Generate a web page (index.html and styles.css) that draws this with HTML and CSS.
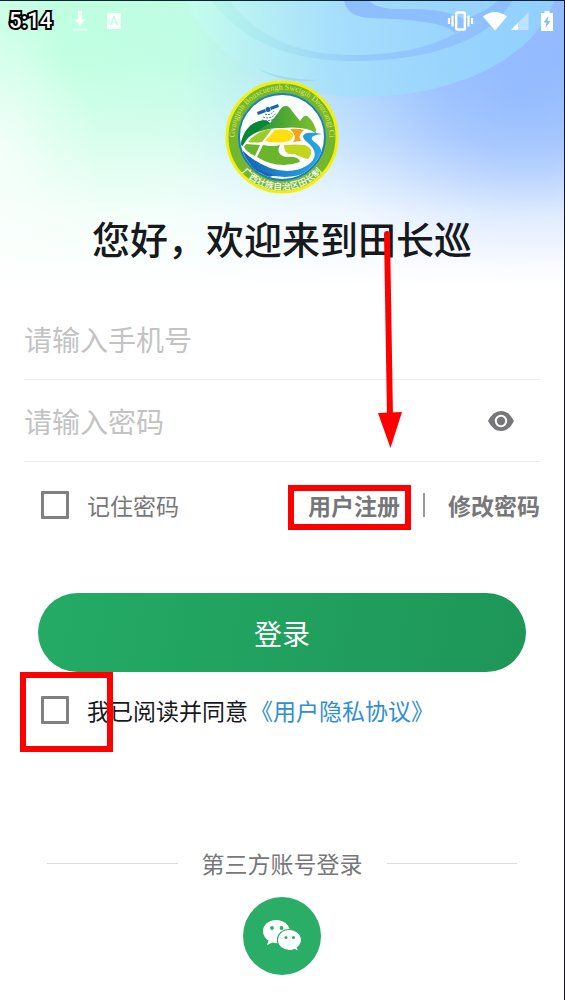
FILE: index.html
```html
<!DOCTYPE html>
<html lang="zh-CN">
<head>
<meta charset="utf-8">
<meta name="viewport" content="width=device-width, initial-scale=1">
<title>田长巡</title>
<link rel="stylesheet" href="styles.css">
</head>
<body>
<div class="screen">
  <svg class="backdrop" viewBox="0 0 564 320" preserveAspectRatio="none" aria-hidden="true">
    <defs>
      <linearGradient id="hue" x1="0" y1="0" x2="564" y2="60" gradientUnits="userSpaceOnUse">
        <stop offset="0" stop-color="#ccffe8"/>
        <stop offset=".12" stop-color="#bfffe0"/>
        <stop offset=".34" stop-color="#befde4"/>
        <stop offset=".55" stop-color="#aee0fb"/>
        <stop offset=".78" stop-color="#97c1ff"/>
        <stop offset="1" stop-color="#8fb6ff"/>
      </linearGradient>
      <linearGradient id="fade" x1="0" y1="0" x2="0" y2="1">
        <stop offset="0" stop-color="#fff" stop-opacity="0"/>
        <stop offset=".2" stop-color="#fff" stop-opacity=".06"/>
        <stop offset=".42" stop-color="#fff" stop-opacity=".36"/>
        <stop offset=".66" stop-color="#fff" stop-opacity=".82"/>
        <stop offset=".9" stop-color="#fff"/>
      </linearGradient>
      <radialGradient id="glow">
        <stop offset="0" stop-color="#8fb8ff" stop-opacity=".7"/>
        <stop offset=".35" stop-color="#94bcff" stop-opacity=".52"/>
        <stop offset=".7" stop-color="#a4c8ff" stop-opacity=".18"/>
        <stop offset="1" stop-color="#c0d8ff" stop-opacity="0"/>
      </radialGradient>
      <radialGradient id="haze">
        <stop offset="0" stop-color="#fff" stop-opacity=".6"/>
        <stop offset=".5" stop-color="#fff" stop-opacity=".3"/>
        <stop offset="1" stop-color="#fff" stop-opacity="0"/>
      </radialGradient>
      <linearGradient id="ring" x1="185" y1="0" x2="560" y2="0" gradientUnits="userSpaceOnUse">
        <stop offset="0" stop-color="#c8fff0" stop-opacity=".6"/>
        <stop offset=".4" stop-color="#a4e0fb" stop-opacity=".75"/>
        <stop offset="1" stop-color="#8fd0ff" stop-opacity=".95"/>
      </linearGradient>
      <linearGradient id="band" x1="220" y1="0" x2="505" y2="0" gradientUnits="userSpaceOnUse">
        <stop offset="0" stop-color="#a8eee4" stop-opacity=".3"/>
        <stop offset=".5" stop-color="#93c8fa" stop-opacity=".9"/>
        <stop offset="1" stop-color="#8dbfff"/>
      </linearGradient>
    </defs>
    <rect width="564" height="320" fill="url(#hue)"/>
    <rect width="564" height="320" fill="url(#fade)"/>
    <ellipse cx="0" cy="150" rx="100" ry="130" fill="url(#haze)"/>
    <ellipse cx="520" cy="90" rx="220" ry="180" fill="url(#glow)"/>
    <path d="M187 0C208 52 272 96 360 96C448 96 532 62 554 0Z" fill="url(#ring)"/>
    <path d="M212 0C235 32 278 59 350 60C430 61 492 38 512 0H498C492 12 476 24 452 34C430 46 400 54 350 54C292 53 252 31 230 0Z" fill="url(#band)"/>
    <path d="M344 0C347 12 356 16 370 17C410 18 448 22 455 32Q484 20 502 0H498Q484 12 464 18C446 8 420 8 400 8Q376 8 370 0Z" fill="#8dbfff"/>
    <path d="M258 68Q284 79 317 79Q286 84 258 68Z" fill="#98d4ea" opacity=".7"/>
  </svg>

  <header class="status">
    <div class="status-group">
      <time class="clock">5:14</time>
      <svg class="dl" width="18" height="22" viewBox="0 0 18 22" fill="#fff" opacity=".8" aria-hidden="true"><path d="M7 1h4v8h4l-6 7-6-7h4zM2 18.500h14v2H2z"/></svg>
      <svg width="16" height="18" viewBox="0 0 16 18" aria-hidden="true"><rect x="1" y="1" width="14" height="16" rx="1" fill="#fff" opacity=".9"/><path d="M4.500 13L8 4.500l3.500 8.500M5.800 10.500h4.400" fill="none" stroke="#c9fbe6" stroke-width="1.600"/></svg>
    </div>
    <div class="status-group status-right">
      <svg width="27" height="20" viewBox="0 0 27 20" fill="none" stroke="#fff" aria-hidden="true"><rect x="9.200" y="1.500" width="8.600" height="17" rx="1" stroke-width="2.400"/><path d="M5.500 4.500v11M21.500 4.500v11M2 7v6M25 7v6" stroke-width="2.200"/></svg>
      <svg class="wifi" width="26" height="20" viewBox="0 0 26 20" fill="#fff" aria-hidden="true"><path d="M1 5.500Q13-3.500 25 5.500L13 19.500z"/></svg>
      <svg width="18" height="18" viewBox="0 0 18 18" fill="#fff" aria-hidden="true"><path d="M17.500 0v18H0z" opacity=".4"/><path d="M7 11v7H0z"/></svg>
      <svg class="battery" width="12" height="20" viewBox="0 0 12 20" aria-hidden="true"><path d="M3.500 0h5v2H12v18H0V2h3.500z" fill="#fff"/><path d="M7.500 5L2.500 11.500h3L4.500 17l5-7h-3z" fill="#8bb6f5"/></svg>
    </div>
  </header>

  <main class="content">
    <svg class="logo" width="114" height="114" viewBox="0 0 114 114" role="img" aria-label="广西壮族自治区田长制">
      <defs>
        <path id="arcTop" d="M13 75A47.500 47.500 0 1 1 101 75"/>
        <path id="arcBottom" d="M5 67A53 53 0 0 0 109 67"/>
        <clipPath id="disc"><circle cx="57" cy="57" r="42"/></clipPath>
        <linearGradient id="hill" x1="0" x2="1"><stop offset="0" stop-color="#0a8a3c"/><stop offset="1" stop-color="#7fc02c"/></linearGradient>
        <linearGradient id="river" x1="0" x2="1"><stop offset="0" stop-color="#1464b4"/><stop offset="1" stop-color="#27a8e6"/></linearGradient>
      </defs>
      <circle cx="57" cy="57" r="55" fill="#74b72e" stroke="#f3ef0c" stroke-width="3"/>
      <circle cx="57" cy="57" r="43" fill="#fff" stroke="#1c7fc0" stroke-width="2"/>
      <g clip-path="url(#disc)">
        <path d="M16 64C18 52 25 43 35 41Q41 39 45 43L53 33Q57 25 61 26Q64 26 67 31L75 41Q79 35 82 36Q87 39 91 49V54H45Q27 54 17 66Z" fill="url(#hill)"/>
        <path d="M16 64C18 52 25 43 35 41Q41 39 45 43Q35 48 30 54Q22 58 17 66Z" fill="#078538"/>
        <path d="M19 65C22 53 40 48 58 48Q82 46 92 54L93 75Q82 87 59 87Q34 87 19 71Z" fill="#fff"/>
        <path d="M23 62Q33 50 47 49L37 62Q29 63 23 62Z" fill="#9ccb28"/>
        <path d="M50 50Q59 48 65 51Q72 56 64 61Q52 64 40 61Z" fill="#ffde0d"/>
        <path d="M65 49Q73 48 79 50Q72 56 76 61L68 62Q73 56 65 49Z" fill="#f6a31b"/>
        <path d="M21 64L35 65L30 76Q20 71 19 67Z" fill="#6bb52d"/>
        <path d="M38 65Q48 67 55 65Q50 74 61 77Q74 76 75 82Q53 90 32 77Z" fill="#6bb52d"/>
        <path d="M59 65Q70 64 80 65Q91 70 83 79Q74 77 70 74Q59 76 59 65Z" fill="#c5d51d"/>
        <path d="M97 54C78 50 74 56 82 62Q97 74 83 85Q67 95 45 88Q29 82 17 70Q21 88 39 94Q66 101 84 91Q106 76 91 63Q80 56 97 54Z" fill="url(#river)"/>
        <path d="M24 83Q36 92 50 95L39 99Z" fill="#1768b3"/>
      </g>
      <g fill="#1464b4"><path d="M32 32l8-3 1 3-8 3zM45 27l8-3 1 3-8 3z"/><circle cx="43" cy="29.500" r="2.500"/></g>
      <g fill="none" stroke="#3f7d9f" stroke-width="1" stroke-dasharray="2 1"><path d="M40 34q5 2 9-3"/><path d="M38 37q8 3 13-4"/><path d="M37 40q11 3 17-6"/></g>
      <text class="seal-top"><textPath href="#arcTop" startOffset="50%" text-anchor="middle">Gvangjsih Bouxcuengh Swcigih Denzcangj Ci</textPath></text>
      <text class="seal-bottom"><textPath href="#arcBottom" startOffset="50%" text-anchor="middle">广西壮族自治区田长制</textPath></text>
    </svg>
    <h1 class="title">您好，欢迎来到田长巡</h1>

    <form class="form">
      <div class="field">
        <input class="input" type="tel" placeholder="请输入手机号" aria-label="手机号">
      </div>
      <div class="field">
        <input class="input" type="password" placeholder="请输入密码" aria-label="密码">
        <button class="eye" type="button" aria-label="显示密码">
          <svg width="26" height="20" viewBox="0 0 26 20" aria-hidden="true"><path d="M0 10Q5 0 13 0T26 10Q21 20 13 20T0 10Z" fill="#77777a"/><circle cx="13" cy="10" r="5.200" fill="#77777a" stroke="#fff" stroke-width="2"/></svg>
        </button>
      </div>

      <div class="options">
        <label class="check muted"><input class="box" type="checkbox"><span>记住密码</span></label>
        <nav class="links">
          <a class="link marked" href="#register">用户注册</a>
          <span class="bar"></span>
          <a class="link" href="#password">修改密码</a>
        </nav>
      </div>

      <button class="submit" type="submit">登录</button>

      <div class="agree">
        <span class="tick marked"><input class="box" id="agree" type="checkbox"></span>
        <label for="agree">我已阅读并同意</label>
        <a class="policy" href="#privacy">《用户隐私协议》</a>
      </div>
    </form>

    <footer class="third">
      <div class="divider"><span>第三方账号登录</span></div>
      <button class="wechat" type="button" aria-label="微信登录">
        <svg width="40" height="34" viewBox="0 0 40 34" aria-hidden="true">
          <path d="M14 1C6.500 1 1 6 1 12Q1 18 6.500 21.500L5 26L10.500 23.500Q14 24.500 18 24C26 23 28 17 28 12C27.500 6 22 1 14 1Z" fill="#fff"/>
          <path d="M27.500 10.500C20.500 10.500 15.500 15 15.500 21S20.500 31.500 27.500 31.500Q30.500 31.500 32.500 30.500L36.500 32.500L35.500 28.500Q39.500 25.500 39.500 21C39.500 15 34 10.500 27.500 10.500Z" fill="#fff" stroke="#2aae67" stroke-width="1.200"/>
          <g fill="#2aae67"><circle cx="10" cy="9" r="1.900"/><circle cx="19.500" cy="9" r="1.900"/><circle cx="24" cy="18.500" r="1.500"/><circle cx="31.500" cy="18.500" r="1.500"/></g>
        </svg>
      </button>
    </footer>
  </main>

  <svg class="arrow" width="26" height="222" viewBox="0 0 26 222" aria-hidden="true"><path d="M10 5L13 188" stroke="#f00" stroke-width="6" stroke-linecap="round"/><path d="M1 184L25 183L13.500 219Z" fill="#f00"/></svg>
</div>
</body>
</html>
```
FILE: styles.css
```css
* { box-sizing: border-box; }

body {
  margin: 0;
  background: #fff;
  color: #17191c;
  font-family: "Noto Sans CJK SC", "Noto Sans", sans-serif;
  font-size: 23px;
}

button, input { font: inherit; }
a { text-decoration: none; }
svg { display: block; flex: none; }

.screen {
  position: relative;
  min-height: 100vh;
  border-top: 1px solid #0b2230;
  border-right: 1px solid #14142e;
}

.backdrop {
  position: absolute;
  top: 0;
  left: 0;
  width: 100%;
  height: 320px;
}

.status {
  position: relative;
  display: flex;
  align-items: center;
  justify-content: space-between;
  height: 39px;
  padding: 0 11px 0 9px;
}

.status-group { display: flex; align-items: center; gap: 17px; }
.status-right { gap: 3px; }
.dl { margin-left: 2px; }
.wifi { margin-left: 5px; }
.battery { margin-left: 9px; }

.clock {
  color: #fff;
  font: 500 22px/26px Roboto, sans-serif;
  -webkit-text-stroke: 4px #000;
  paint-order: stroke fill;
}

.content {
  position: relative;
  display: flex;
  flex-direction: column;
  align-items: center;
  padding: 40px 24px 24px;
}

.seal-top { font: 8px "Liberation Serif", serif; fill: #dcea5a; }
.seal-bottom { font: 500 9px "Noto Sans CJK SC", sans-serif; fill: #fff; }

.title {
  margin: 20px 0 36px;
  font-size: 38px;
  line-height: 48px;
  font-weight: 500;
}

.form { width: 100%; }

.field {
  display: flex;
  align-items: center;
  height: 82px;
  border-bottom: 1px solid #ebebeb;
}

.input {
  flex: 1;
  min-width: 0;
  height: 48px;
  padding: 0;
  border: 0;
  outline: 0;
  background: none;
  font-size: 28px;
}

.input::placeholder { color: #c3c3c3; opacity: 1; }

.eye {
  margin-right: 26px;
  padding: 0;
  border: 0;
  background: none;
}

.options {
  display: flex;
  align-items: center;
  justify-content: space-between;
  height: 44px;
  margin-top: 21px;
}

.check, .agree { display: flex; align-items: center; padding-left: 17px; }
.check { gap: 18px; }
.muted { color: #77777a; }

.box {
  appearance: none;
  display: block;
  width: 28px;
  height: 28px;
  margin: 0;
  border: 3px solid #808080;
  border-radius: 1px;
  background: #fff;
}

.links { display: flex; align-items: center; }
.link { color: #77777a; font-weight: 700; }
.bar { width: 2px; height: 24px; margin: 0 23px; background: #99999c; }

.marked { position: relative; }
.marked::after {
  content: "";
  position: absolute;
  border: 6px solid #f00;
  pointer-events: none;
}
.link.marked::after { inset: -3px -11px -8px -20px; }
.tick.marked::after { inset: -24px -44px -28px -21px; }

.submit {
  display: block;
  width: calc(100% - 28px);
  height: 79px;
  margin: 66px 14px 16px;
  padding: 0;
  border: 0;
  border-radius: 40px;
  background: linear-gradient(100deg, #24ab65, #1e9658);
  color: #fff;
  font-size: 28px;
}

.agree { height: 44px; }
.agree label { margin-left: 18px; }
.policy { margin-left: 2px; color: #2f8fd3; }

.third {
  display: flex;
  flex-direction: column;
  align-items: center;
  width: 100%;
  margin-top: 114px;
  padding: 0 23px;
}

.divider {
  display: flex;
  align-items: center;
  gap: 24px;
  width: 100%;
  line-height: 34px;
  color: #77777a;
}

.divider::before, .divider::after {
  content: "";
  flex: 1;
  height: 1px;
  background: #dcdcdc;
}

.wechat {
  display: grid;
  place-items: center;
  width: 78px;
  height: 78px;
  margin-top: 17px;
  padding: 0;
  border: 0;
  border-radius: 50%;
  background: #2aae67;
}

.arrow {
  position: absolute;
  top: 228px;
  left: calc(50% + 95px);
}
```
